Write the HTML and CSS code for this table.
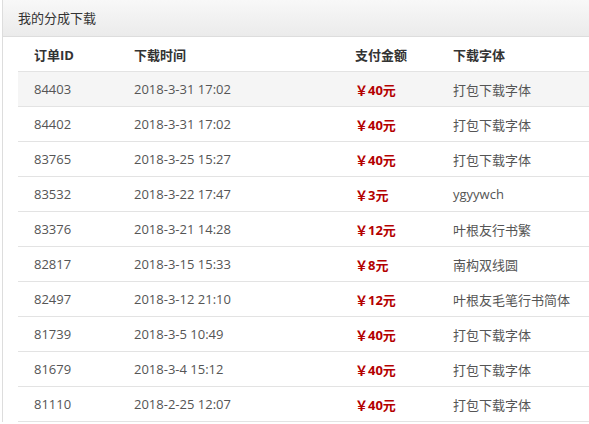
FILE: index.html
```html
<!DOCTYPE html>
<html lang="zh">
<head>
<meta charset="utf-8">
<link rel="stylesheet" href="styles.css">
</head>
<body>
<div class="panel">
  <div class="panel-head">我的分成下载</div>
  <div class="panel-body">
    <table class="orders">
      <thead>
        <tr><th class="c-id">订单ID</th><th class="c-time">下载时间</th><th class="c-amt">支付金额</th><th class="c-font">下载字体</th></tr>
      </thead>
      <tbody>
        <tr class="hl"><td>84403</td><td>2018-3-31 17:02</td><td class="amt">￥40元</td><td>打包下载字体</td></tr>
        <tr><td>84402</td><td>2018-3-31 17:02</td><td class="amt">￥40元</td><td>打包下载字体</td></tr>
        <tr><td>83765</td><td>2018-3-25 15:27</td><td class="amt">￥40元</td><td>打包下载字体</td></tr>
        <tr><td>83532</td><td>2018-3-22 17:47</td><td class="amt">￥3元</td><td>ygyywch</td></tr>
        <tr><td>83376</td><td>2018-3-21 14:28</td><td class="amt">￥12元</td><td>叶根友行书繁</td></tr>
        <tr><td>82817</td><td>2018-3-15 15:33</td><td class="amt">￥8元</td><td>南构双线圆</td></tr>
        <tr><td>82497</td><td>2018-3-12 21:10</td><td class="amt">￥12元</td><td>叶根友毛笔行书简体</td></tr>
        <tr><td>81739</td><td>2018-3-5 10:49</td><td class="amt">￥40元</td><td>打包下载字体</td></tr>
        <tr><td>81679</td><td>2018-3-4 15:12</td><td class="amt">￥40元</td><td>打包下载字体</td></tr>
        <tr><td>81110</td><td>2018-2-25 12:07</td><td class="amt">￥40元</td><td>打包下载字体</td></tr>
      </tbody>
    </table>
  </div>
</div>
</body>
</html>
```
FILE: styles.css
```css
html, body {
  margin: 0;
  padding: 0;
  background: #fff;
  overflow: hidden;
}
body {
  font-family: "Open Sans", "Noto Sans CJK SC", sans-serif;
  font-size: 13px;
  color: #555;
}
.panel {
  margin-left: 2px;
  width: 640px;
  border-left: 1px solid #ddd;
}
.panel-head {
  height: 36px;
  line-height: 36px;
  padding-left: 15px;
  color: #333;
  background: linear-gradient(#f8f8f8, #ebebeb);
  border-bottom: 1px solid #ddd;
}
.panel-body {
  padding-left: 15px;
}
.orders {
  border-collapse: collapse;
  width: 620px;
}
.orders th,
.orders td {
  height: 34px;
  padding: 0 0 0 16px;
  text-align: left;
  white-space: nowrap;
  vertical-align: middle;
}
.orders th {
  color: #333;
  font-weight: bold;
}
.orders td {
  border-top: 1px solid #e3e3e3;
}
.orders tbody tr:last-child td {
  border-bottom: 1px solid #e3e3e3;
}
.c-id { width: 84px; }
.c-time { width: 205px; }
.c-amt { width: 82px; }
.orders tr.hl td { background: #f5f5f5; }
.amt {
  color: #b40000;
  font-weight: bold;
}
```
